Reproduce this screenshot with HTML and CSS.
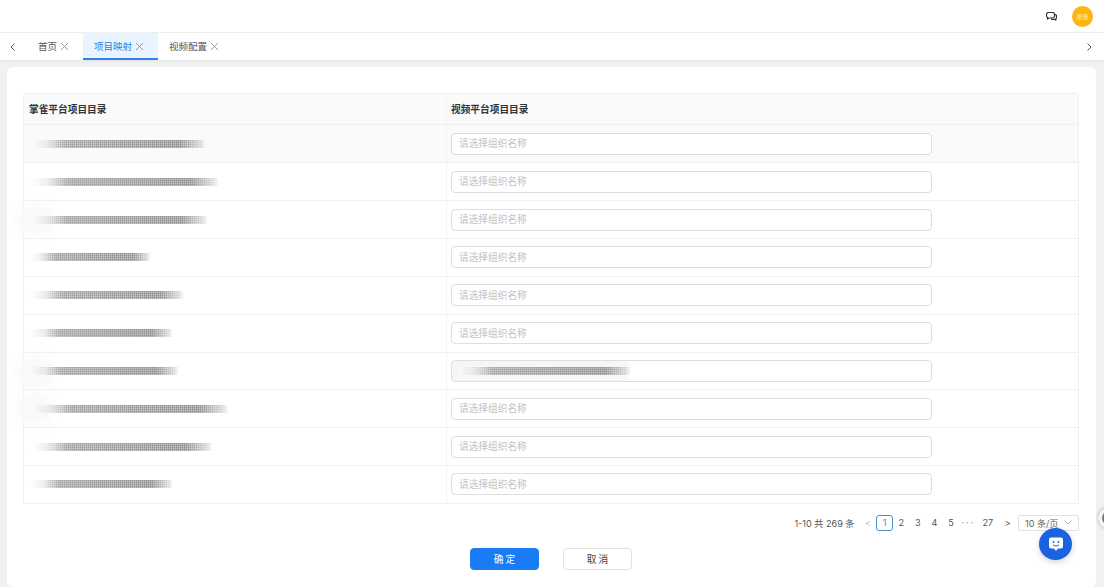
FILE: index.html
```html
<!DOCTYPE html>
<html lang="zh">
<head>
<meta charset="utf-8">
<title>项目映射</title>
<link rel="stylesheet" href="styles.css">
</head>
<body>
<header class="topbar">
  <svg class="msg" width="11" height="9" viewBox="0 0 11 9" fill="none" stroke="#333" stroke-width="1.200"><path d="M2.500.500h4a2 2 0 0 1 2 2v1.500a2 2 0 0 1-2 2H3L1.500 7V5.500A2 2 0 0 1 .5 4V2.500a2 2 0 0 1 2-2z"/><path d="M8.500 2.500h.3a1.700 1.700 0 0 1 1.700 1.700v1.300a1.700 1.700 0 0 1-.8 1.400V8L8.200 7.300H5"/></svg>
  <div class="avatar">张锋</div>
</header>
<nav class="tabs">
  <svg class="arrow" width="5" height="8" viewBox="0 0 5 8" fill="none" stroke="#555" stroke-width="1"><path d="M4.500.500 1 4l3.500 3.500"/></svg>
  <div class="tab">首页<svg class="x" width="9" height="9" viewBox="0 0 9 9" stroke="#999" stroke-width="1"><path d="M1 1l7 7M8 1 1 8"/></svg></div>
  <div class="tab active">项目映射<svg class="x" width="9" height="9" viewBox="0 0 9 9" stroke="#999" stroke-width="1"><path d="M1 1l7 7M8 1 1 8"/></svg></div>
  <div class="tab">视频配置<svg class="x" width="9" height="9" viewBox="0 0 9 9" stroke="#999" stroke-width="1"><path d="M1 1l7 7M8 1 1 8"/></svg></div>
  <svg class="arrow right" width="5" height="8" viewBox="0 0 5 8" fill="none" stroke="#555" stroke-width="1"><path d="M.5.500 4 4 .5 7.500"/></svg>
</nav>
<main class="card">
  <div class="table">
    <div class="row head"><div class="c1">掌雀平台项目目录</div><div class="c2">视频平台项目目录</div></div>
    <div class="row first"><div class="c1"><span class="smear" style="width:175px"></span></div><div class="c2"><div class="input">请选择组织名称</div></div></div>
    <div class="row"><div class="c1"><span class="smear" style="width:188px"></span></div><div class="c2"><div class="input">请选择组织名称</div></div></div>
    <div class="row"><div class="c1 halo"><span class="smear" style="width:177px"></span></div><div class="c2"><div class="input">请选择组织名称</div></div></div>
    <div class="row"><div class="c1"><span class="smear" style="width:120px"></span></div><div class="c2"><div class="input">请选择组织名称</div></div></div>
    <div class="row"><div class="c1"><span class="smear" style="width:153px"></span></div><div class="c2"><div class="input">请选择组织名称</div></div></div>
    <div class="row"><div class="c1"><span class="smear" style="width:142px"></span></div><div class="c2"><div class="input">请选择组织名称</div></div></div>
    <div class="row"><div class="c1 halo"><span class="smear" style="width:148px"></span></div><div class="c2"><div class="input filled"><span class="smear" style="width:172px"></span></div></div></div>
    <div class="row"><div class="c1 halo"><span class="smear" style="width:198px"></span></div><div class="c2"><div class="input">请选择组织名称</div></div></div>
    <div class="row"><div class="c1"><span class="smear" style="width:182px"></span></div><div class="c2"><div class="input">请选择组织名称</div></div></div>
    <div class="row"><div class="c1"><span class="smear" style="width:142px"></span></div><div class="c2"><div class="input">请选择组织名称</div></div></div>
  </div>
  <div class="pager">
    <span class="total">1-10 共 269 条</span>
    <span class="pg muted">&lt;</span>
    <span class="pg current">1</span>
    <span class="pg">2</span><span class="pg">3</span><span class="pg">4</span><span class="pg">5</span>
    <span class="pg muted dots">···</span>
    <span class="pg wide">27</span>
    <span class="pg">&gt;</span>
    <span class="size">10 条/页<svg width="8" height="5" viewBox="0 0 8 5" fill="none" stroke="#bbb"><path d="M.5.500 4 4 7.500.500"/></svg></span>
  </div>
  <div class="actions">
    <button class="btn primary">确 定</button>
    <button class="btn">取 消</button>
  </div>
</main>
<div class="fab">
  <svg width="16" height="16" viewBox="0 0 16 16"><path fill="#fff" d="M3 1.500h10a2 2 0 0 1 2 2v7a2 2 0 0 1-2 2h-3L8 15l-2-2.500H3a2 2 0 0 1-2-2v-7a2 2 0 0 1 2-2z"/><circle cx="5.500" cy="6" r="1" fill="#1a62e0"/><circle cx="10.500" cy="6" r="1" fill="#1a62e0"/><path d="M5 9c1.500 1.200 4.500 1.200 6 0" fill="none" stroke="#1a62e0" stroke-width="1"/></svg>
</div>
<div class="edge"></div>
</body>
</html>
```
FILE: styles.css
```css
* { box-sizing: border-box; }
html, body { margin: 0; height: 587px; overflow: hidden; }
body {
  position: relative;
  background: #f1f1f1;
  font-family: "Noto Sans CJK SC", "Liberation Sans", sans-serif;
  font-size: 9.700px;
  color: #444;
}
.topbar {
  height: 33px;
  background: #fff;
  display: flex;
  align-items: center;
  justify-content: flex-end;
  gap: 15px;
  padding-right: 11px;
  border-bottom: 1px solid #f0f0f0;
}
.avatar {
  width: 21px;
  height: 21px;
  border-radius: 50%;
  background: #fbb614;
  color: #ffeeb8;
  font-size: 6px;
  display: flex;
  align-items: center;
  justify-content: center;
}
.tabs {
  height: 27px;
  background: #fff;
  display: flex;
  align-items: stretch;
  box-shadow: 0 1px 3px rgba(0,0,0,.06);
}
.arrow { align-self: center; margin-left: 10px; margin-right: 12px; }
.arrow.right { margin-left: auto; margin-right: 12px; }
.tab {
  display: flex;
  align-items: center;
  gap: 3px;
  padding: 0 14px 1px 11px;
  font-size: 9.500px;
  color: #555;
}
.tab.active {
  color: #2f80e8;
  background: #e8f4ff;
  border-bottom: 2px solid #2f80e8;
  padding: 1px 14px 0 11px;
}
.card {
  margin: 7px 8px 0 7px;
  height: 520px;
  background: #fff;
  border-radius: 6px;
  padding: 26px 17px 0 16px;
}
.table {
  border: 1px solid #f0f0f0;
  border-bottom: 0;
  border-radius: 4px 4px 0 0;
}
.row {
  display: flex;
  height: 37.850px;
  border-bottom: 1px solid #f0f0f0;
}
.row.head {
  height: 31.450px;
  background: #fafafa;
  font-weight: 700;
  color: #333;
}
.row.first { background: #fafafa; }
.c1 {
  position: relative;
  width: 423px;
  flex: none;
  padding-left: 5px;
  display: flex;
  align-items: center;
  border-right: 1px solid #f2f2f2;
}
.c1.halo::before {
  content: "";
  position: absolute;
  left: -8px;
  top: 3px;
  width: 38px;
  height: 32px;
  border-radius: 50%;
  background: #f9f9f9;
  filter: blur(5px);
}
.c2 {
  flex: 1;
  padding: 0 0 0 4px;
  display: flex;
  align-items: center;
}
.smear {
  position: relative;
  display: block;
  height: 8px;
  margin-left: 2px;
  background:
    repeating-linear-gradient(90deg, rgba(255,255,255,.28) 0 1px, rgba(255,255,255,0) 1px 2px),
    repeating-linear-gradient(0deg, rgba(255,255,255,.22) 0 1px, rgba(255,255,255,0) 1px 2px),
    linear-gradient(90deg, rgba(130,130,130,0) 0, rgba(130,130,130,.18) 9%, #a2a2a2 20%, #8e8e8e 85%, rgba(130,130,130,.3) 97%, rgba(130,130,130,0));
  filter: blur(.7px);
}
.input {
  width: 481px;
  height: 22px;
  background: #fff;
  border: 1px solid #dedede;
  border-radius: 4px;
  padding: 0 0 1px 7px;
  display: flex;
  align-items: center;
  color: #c2c2c2;
}
.input.filled {
  padding: 0 0 0 5px;
  background: linear-gradient(90deg, #f6f6f6 0, #f6f6f6 172px, #fff 180px);
}
.pager {
  display: flex;
  justify-content: flex-end;
  align-items: center;
  margin-top: 11px;
  height: 16px;
  font-family: "Inter", "Noto Sans CJK SC", sans-serif;
  font-size: 9.100px;
  color: #555;
}
.total { margin-right: 5px; }
.pg {
  width: 16.600px;
  flex: none;
  height: 16px;
  display: flex;
  align-items: center;
  justify-content: center;
}
.pg.muted { color: #bbb; }
.pg.dots { width: 17px; letter-spacing: 1.500px; font-weight: 700; color: #aaa; }
.pg.wide { width: 23px; }
.pg.current { width: 17px; border: 1px solid #4a8fc8; border-radius: 3px; color: #4a8fc8; }
.size {
  margin-left: 2px;
  width: 61px;
  height: 16px;
  flex: none;
  border: 1px solid #e2e2e2;
  border-radius: 2px;
  padding: 0 6px;
  display: flex;
  align-items: center;
  justify-content: space-between;
  color: #666;
}
.actions {
  display: flex;
  gap: 24px;
  margin: 17px 0 0 447px;
}
.btn {
  width: 69px;
  height: 22px;
  border: 1px solid #e2e2e2;
  border-radius: 4px;
  background: #fff;
  font: inherit;
  color: #444;
}
.btn.primary { background: #1a7cf5; border-color: #1a7cf5; color: #fff; }
.fab {
  position: absolute;
  left: 1039px;
  top: 528px;
  width: 33px;
  height: 32px;
  border-radius: 50%;
  background: #1a62e0;
  box-shadow: 0 2px 6px rgba(0,0,0,.18);
  display: flex;
  align-items: center;
  justify-content: center;
}
.edge {
  position: absolute;
  left: 1096px;
  top: 505px;
  width: 26px;
  height: 26px;
  border-radius: 50%;
  background: #777;
  border: 2px solid #e4e4e4;
  box-shadow: inset 0 0 0 4px #f6f6f6;
}
```
